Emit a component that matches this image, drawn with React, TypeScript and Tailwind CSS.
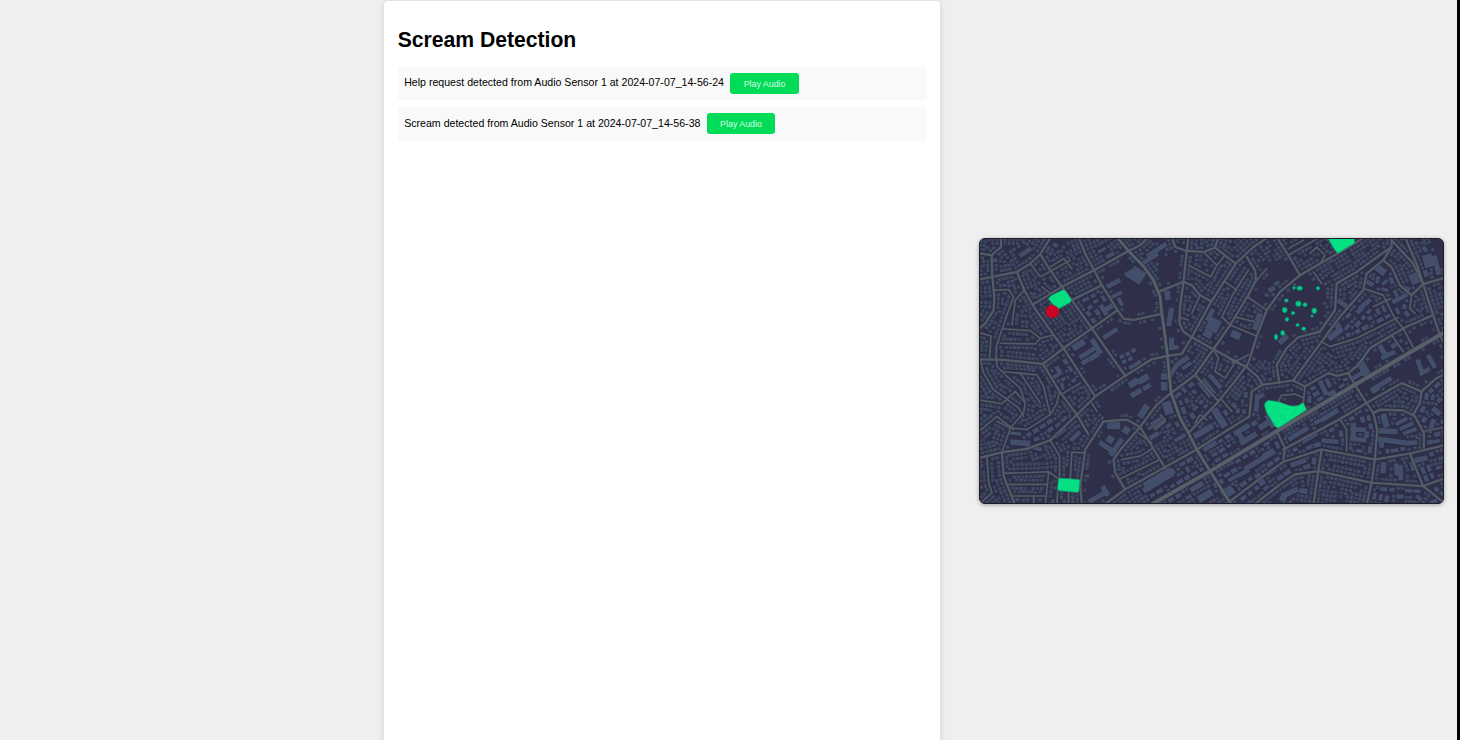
import React from "react";

type Pt = [number, number];

const parse = (s: string): Pt[] =>
  s.trim().split(/\s+/).map((p) => p.split(",").map(Number) as Pt);

const HIGHWAY = "540,828 720,725 920,605 1155,465 1410,315 1428,304";
const AVENUES = [
  "440,20 475,62 520,108 550,150 570,200 575,250 585,320 592,378 603,490 630,565 655,610 680,660 720,725 785,828",
];
const STREETS = [
  "535,20 510,45 475,62 372,120 275,170 190,222",
  "242,20 210,72 180,100 140,125 66,140 20,149",
  "92,20 92,50 64,75 66,140 72,200 70,240 45,280 20,302",
  "20,68 64,75",
  "325,20 345,70 372,120 395,165 442,240 460,266 490,270 572,252",
  "140,125 162,180 190,230 250,315 280,355 335,440 375,500",
  "210,72 240,120 275,170 305,210 365,295 465,438",
  "442,240 365,295 280,355 218,402 100,390 20,388",
  "305,210 395,165",
  "635,372 592,378 545,388 465,438 375,500 320,555 240,632 170,658 95,668 20,687",
  "655,20 650,62 640,155 630,230 628,280 640,305 665,322 730,358 830,412 862,440 878,465",
  "570,183 640,155 665,165 690,195 720,212",
  "635,372 665,322 720,220 797,100 850,50 895,20",
  "605,20 615,50 650,62 700,65 735,52 745,20",
  "735,52 797,100",
  "1125,57 1085,80 990,135 930,185 890,240 860,318 835,400 790,460 745,515 655,610",
  "1185,20 1125,57",
  "920,20 955,75 990,135",
  "1265,20 1265,50 1225,78 1160,125 1100,160 1095,240 1050,305 985,322 950,355 920,405 928,460",
  "1265,50 1240,90 1190,130 1180,180 1110,260 1055,335 970,452",
  "1265,30 1330,100 1360,162",
  "1305,20 1340,100 1360,162 1390,255 1410,315 1428,350",
  "1240,90 1265,110 1290,165 1325,195 1360,162 1428,142",
  "1390,255 1300,295 1200,355 1165,405 1135,430 1100,438 1075,430 1005,470 970,452 878,465 845,485 838,560 680,660",
  "1135,430 1155,465 1190,520 1210,550 1222,600 1215,690 1205,760 1190,828",
  "1428,432 1400,445 1355,485 1295,460 1190,520 1110,568 940,660",
  "1210,550 1230,540 1300,542 1335,560 1362,610 1362,655",
  "1355,485 1350,520 1330,555",
  "920,605 945,655 940,690",
  "780,815 860,755 940,697 1055,660 1215,690 1320,672 1428,646",
  "1055,660 1045,725 1030,828",
  "850,828 930,765 975,735 1045,725 1205,760 1360,770 1428,825",
  "1320,672 1360,770 1428,745",
  "400,828 465,780 680,660",
  "335,828 330,770 345,660 400,575 470,570 510,592 560,525 603,490",
  "510,592 455,655 430,690 435,730 465,780",
  "510,592 545,650 585,715",
  "675,435 710,475 745,515",
  "95,668 100,740 135,828",
  "218,402 268,485 320,555 355,615",
  "603,490 675,435 730,358 780,285 832,200 858,150 855,120 830,80",
];
const LANES = [
  "180,100 210,140 300,90",
  "240,110 280,85 305,115",
  "275,170 240,190 215,170",
  "72,180 115,178 130,200 108,260 78,350 78,390",
  "162,180 135,210 125,285",
  "100,297 180,302 210,325 250,315",
  "90,340 195,342 210,325",
  "26,308 62,318 58,385",
  "30,390 40,430 70,480 105,505 145,535 160,560",
  "20,510 95,522 135,485 165,520 160,550 120,595 95,668",
  "78,390 80,410 110,440 150,475 165,520",
  "95,425 200,435 220,470 240,555 170,600 120,595 80,575",
  "150,430 210,520",
  "268,485 260,520 240,555",
  "26,605 80,560 130,600",
  "330,460 280,490",
  "365,520 380,545",
  "240,632 268,680 268,742",
  "300,750 305,668 340,670",
  "100,732 235,727 265,748",
  "108,765 230,765",
  "128,800 225,800",
  "235,730 225,828",
  "50,685 55,760 65,790 30,822",
  "262,785 260,828",
  "295,785 295,828",
  "190,800 190,828",
  "655,105 722,140 740,105 700,65",
  "740,105 765,75",
  "755,260 780,285 860,318",
  "755,262 790,190 835,120",
  "832,200 890,240",
  "765,155 800,180",
  "630,262 655,270",
  "665,250 690,195",
  "800,262 855,275",
  "955,75 1050,20",
  "1020,70 1040,50 1065,75 1050,100",
  "1030,125 1055,160",
  "1055,335 1080,350 1160,325 1250,280 1285,262",
  "1180,175 1240,195 1275,265 1300,295 1330,352",
  "1210,230 1262,205",
  "1325,195 1320,235 1335,250",
  "1265,315 1300,365",
  "1005,470 1000,520",
  "925,515 935,497 975,493 1000,505",
  "1110,568 1130,600 1130,665",
  "730,358 745,385 735,425 765,445 800,390",
  "785,400 835,375",
  "765,375 790,395 830,412",
  "675,580 690,555 710,570",
  "755,510 785,545",
  "505,610 545,640",
  "455,690 510,680 550,655",
  "450,748 570,690",
  "555,600 585,575",
  "955,55 1000,30",
  "860,150 890,115",
  "570,555 585,570 550,595",
  "1362,605 1428,592",
];

const OPEN_LAND = [
  "400,90 460,75 530,130 560,185 568,245 495,262 465,262 445,235 430,190 400,150",
  "375,295 450,258 570,258 585,375 540,385 465,432",
  "285,360 365,305 460,440 375,495",
  "375,515 465,440 590,385 600,485 500,590 400,570",
  "345,820 335,760 350,670 400,580 500,580 440,690 425,740 455,780 400,820",
  "560,90 640,60 635,150 570,178",
  "578,185 625,170 625,290 660,325 630,368 595,370",
  "845,95 960,90 985,135 925,185 885,235 840,200 865,150",
  "935,190 1000,138 1062,155 1062,230 1085,240 1045,300 980,318 910,390 842,400 865,320 895,240",
  "775,300 855,322 830,400 745,360",
  "1100,430 1200,360 1300,300 1400,265 1400,312 1150,460",
  "1160,470 1410,325 1422,430 1350,478 1295,455 1195,515",
  "850,485 1000,470 1000,530 925,595 870,560",
].map(parse);

// Districts with mid-sized buildings instead of small houses.
const MIXED_LAND = [
  "605,495 675,440 740,515 655,605 630,565",
  "665,605 835,490 840,555 680,650",
  "850,560 920,600 850,640 690,665 700,650",
  "1005,470 1080,435 1150,440 1150,460 1010,540",
  "690,660 910,610 720,720",
  "730,730 925,612 938,660 935,690 785,805",
  "1185,190 1225,190 1270,260 1080,345 1065,330",
  "1205,120 1240,95 1285,165 1320,200 1320,250 1280,260 1240,190",
  "1222,550 1300,548 1355,610 1355,655 1220,685",
  "940,665 1190,525 1215,600 1210,685 1060,655",
  "1360,490 1422,450 1422,640 1370,655 1365,600 1340,560",
  "560,525 600,500 650,610 520,590",
  "510,770 660,680 715,728 560,815",
  "110,610 165,610 235,565 310,560 240,628 105,660",
  "245,405 290,380 330,440 270,480",
  "1310,670 1422,650 1422,820 1360,760",
  "320,210 395,170 440,240 365,290",
  "1190,770 1350,780 1400,820 1190,820",
  "800,760 1050,670 1040,715 940,755 860,820 795,820",
  "560,820 720,735 770,820",
  "1345,50 1422,30 1422,140 1365,155",
].map(parse);

// Large footprints: centre x, centre y, width, height, rotation.
const BLOCKS: number[][] = [
  [500, 135, 44, 42, 32], [478, 128, 32, 14, -28], [430, 160, 46, 14, -28],
  [438, 195, 38, 12, -28], [450, 215, 12, 26, -28], [418, 232, 38, 16, -32], [400, 240, 14, 36, -32],
  [420, 311, 50, 14, -33], [560, 60, 70, 15, -33], [540, 85, 54, 14, -33],
  [592, 196, 17, 30, -10], [602, 250, 16, 34, 8], [597, 276, 16, 26, 8], [604, 342, 16, 38, 2], [613, 353, 24, 14, -8],
  [325, 345, 42, 20, -32], [350, 370, 54, 14, -32], [378, 350, 16, 52, -32], [345, 395, 26, 14, -32], [372, 380, 34, 16, -32],
  [258, 438, 34, 12, -32], [265, 422, 14, 28, -32],
  [495, 405, 42, 12, -32], [455, 380, 14, 12, -30], [473, 372, 14, 12, -30], [490, 362, 14, 12, -30], [462, 395, 14, 12, -30], [480, 387, 14, 12, -30],
  [582, 440, 20, 20, 0], [582, 470, 20, 26, 0], [490, 460, 32, 20, -32], [520, 448, 36, 20, -32], [498, 490, 36, 16, -32], [530, 472, 26, 14, -32],
  [520, 545, 20, 44, 32], [593, 535, 28, 40, -18], [562, 575, 44, 16, -32], [548, 590, 36, 10, -32],
  [430, 588, 40, 22, 2], [468, 602, 22, 22, 35], [420, 630, 22, 22, 35], [412, 655, 60, 15, 35], [438, 653, 62, 15, -55],
  [380, 804, 58, 15, -30], [405, 785, 16, 34, -32], [350, 740, 14, 10, 0],
  [565, 750, 96, 30, -31], [600, 730, 30, 20, -31], [535, 775, 38, 16, -31],
  [860, 520, 14, 54, 5], [872, 500, 24, 12, -30], [748, 565, 22, 64, -32], [700, 605, 66, 18, -31],
  [815, 600, 54, 16, -31], [835, 627, 58, 17, -31], [812, 622, 15, 40, -31], [885, 585, 42, 17, -31], [900, 575, 15, 44, -31],
  [870, 692, 104, 16, -31], [895, 672, 38, 16, -31], [840, 710, 38, 14, -31],
  [745, 762, 34, 16, -31], [770, 785, 38, 20, -31], [820, 730, 38, 14, -31], [790, 745, 34, 12, -31], [680, 772, 44, 16, -31], [705, 800, 48, 22, -31],
  [720, 650, 46, 14, -31], [550, 620, 38, 14, -31], [630, 625, 38, 12, -31],
  [730, 285, 38, 40, 28], [713, 312, 28, 22, 28], [862, 275, 18, 54, 18], [797, 315, 30, 22, 25], [720, 255, 14, 40, 28],
  [605, 430, 14, 50, 32], [635, 395, 50, 16, -35], [650, 408, 34, 12, -35], [710, 475, 28, 58, -38], [735, 455, 14, 54, -42],
  [985, 612, 70, 15, -31], [1078, 557, 62, 15, -31], [1045, 575, 28, 12, -31],
  [1350, 410, 14, 44, -20], [1365, 425, 36, 14, -30], [1385, 395, 14, 44, -30], [1240, 460, 58, 15, -31], [1215, 478, 26, 20, -31],
  [1180, 415, 24, 48, -30], [1240, 365, 16, 44, -30], [1255, 375, 46, 14, -25], [1160, 440, 38, 13, -31], [1275, 345, 26, 14, -31],
  [1095, 312, 50, 20, -38], [1105, 290, 18, 28, -30], [1120, 222, 42, 16, 35], [1185, 222, 44, 14, -42], [1170, 240, 26, 14, -42], [1232, 120, 34, 22, 38], [1200, 160, 24, 14, 30],
  [1335, 145, 30, 32, -25], [1290, 205, 52, 13, -28], [1310, 175, 22, 12, 20], [1375, 92, 30, 40, -15], [1400, 105, 16, 60, -15],
  [1245, 573, 18, 42, -15], [1255, 605, 56, 16, 3], [1270, 635, 92, 16, 8], [1310, 590, 46, 12, -25], [1320, 605, 44, 12, -20], [1295, 575, 40, 12, -28], [1325, 640, 34, 14, -5], [1235, 640, 15, 28, 3],
  [1150, 605, 16, 50, 0], [1165, 630, 50, 14, 5], [1170, 600, 36, 14, 5], [1190, 615, 14, 20, 5], [1060, 475, 15, 48, -25], [1085, 490, 26, 14, -25], [1075, 460, 13, 28, -25],
  [1020, 625, 54, 12, -31], [1080, 635, 50, 14, 5], [1350, 690, 48, 16, -12], [1330, 710, 18, 28, -15], [1240, 715, 17, 34, 5], [1280, 720, 14, 36, -8], [1292, 730, 15, 46, -2],
  [960, 790, 54, 16, -25], [940, 805, 20, 24, 25], [1000, 785, 24, 16, 5], [870, 750, 20, 40, -30], [905, 725, 30, 14, -31], [985, 700, 50, 15, -20],
  [905, 178, 20, 14, -30], [920, 160, 18, 11, -30], [890, 195, 13, 10, 0], [940, 328, 34, 18, -45],
  [135, 612, 34, 10, 5], [150, 640, 60, 17, 4], [70, 90, 20, 12, 0], [165, 66, 42, 14, -34], [1385, 590, 14, 44, 20], [1400, 545, 30, 16, 40],
  [255, 45, 16, 12, 20], [190, 655, 50, 12, 12], [395, 60, 26, 10, -30], [420, 75, 28, 12, -30], [780, 790, 30, 18, -30],
  [240, 600, 20, 12, -35], [315, 620, 40, 14, -45], [270, 610, 44, 12, -38],
];

const PARKS = [
  "M234,205 L245,195 L278,179 Q284,178 288,185 L303,208 Q305,213 300,217 L266,236 Q260,238 256,234 Z",
  "M1072,20 L1154,20 L1154,38 L1104,69 Q1099,66 1090,52 Z",
  "M884,530 Q882,516 896,512 L925,516 L960,528 Q985,532 996,520 L1001,520 L1010,541 L928,594 Q919,598 913,587 Q898,561 889,548 Z",
  "M268,746 L326,750 Q330,751 329,757 L326,785 Q325,790 319,789 L266,784 Q262,783 262,778 L264,751 Q265,746 268,746 Z",
];

const TREES: number[][] = [
  [972, 173, 5, 5], [989, 174, 9, 7], [1044, 174, 6, 6], [949, 211, 6, 6], [985, 221, 9, 9], [1005, 224, 7, 7],
  [944, 240, 8, 9], [969, 249, 6, 6], [1033, 242, 8, 9], [1026, 258, 5, 4], [951, 268, 6, 7], [983, 285, 6, 5],
  [1001, 296, 7, 6], [938, 309, 7, 8], [918, 321, 6, 9],
];

const ALL_ROADS = [HIGHWAY, ...AVENUES, ...STREETS, ...LANES].map(parse);
const SEGMENTS = ALL_ROADS.flatMap((r) => r.slice(1).map((p, i) => [r[i][0], r[i][1], p[0], p[1]]));

const noise = (n: number) => {
  const v = Math.sin(n * 127.1 + 11.7) * 43758.5453;
  return v - Math.floor(v);
};

const inside = (x: number, y: number, poly: Pt[]) => {
  let hit = false;
  for (let i = 0, j = poly.length - 1; i < poly.length; j = i++) {
    const [xi, yi] = poly[i];
    const [xj, yj] = poly[j];
    if (yi > y !== yj > y && x < ((xj - xi) * (y - yi)) / (yj - yi) + xi) hit = !hit;
  }
  return hit;
};

const nearRoad = (x: number, y: number, limit: number) =>
  SEGMENTS.some(([ax, ay, bx, by]) => {
    if (x < Math.min(ax, bx) - limit || x > Math.max(ax, bx) + limit) return false;
    if (y < Math.min(ay, by) - limit || y > Math.max(ay, by) + limit) return false;
    const dx = bx - ax;
    const dy = by - ay;
    const t = Math.max(0, Math.min(1, ((x - ax) * dx + (y - ay) * dy) / (dx * dx + dy * dy)));
    return Math.hypot(x - ax - t * dx, y - ay - t * dy) < limit;
  });

const nearRect = (x: number, y: number, rects: number[][], pad: number) =>
  rects.some(([cx, cy, w, h, a]) => {
    const r = (-a * Math.PI) / 180;
    const dx = x - cx;
    const dy = y - cy;
    const u = dx * Math.cos(r) - dy * Math.sin(r);
    const v = dx * Math.sin(r) + dy * Math.cos(r);
    return Math.abs(u) < w / 2 + pad && Math.abs(v) < h / 2 + pad;
  });

// Walks both sides of every street at the given distance from its centre line.
const alongStreets = (
  offset: number,
  step: number,
  visit: (x: number, y: number, angle: number) => void,
) => {
  for (const [ax, ay, bx, by] of SEGMENTS) {
    const len = Math.hypot(bx - ax, by - ay);
    const ux = (bx - ax) / len;
    const uy = (by - ay) / len;
    const angle = (Math.atan2(uy, ux) * 180) / Math.PI;
    for (const side of [-1, 1]) {
      for (let t = step / 2; t < len; t += step) {
        const x = ax + ux * t - uy * offset * side;
        const y = ay + uy * t + ux * offset * side;
        if (x > 22 && x < 1426 && y > 20 && y < 826) visit(x, y, angle);
      }
    }
  }
};

const buildMidBlocks = () => {
  const out: number[][] = [];
  let seed = 500;
  for (const offset of [17, 36, 55]) {
    alongStreets(offset, 25, (x, y, angle) => {
      seed++;
      if (!MIXED_LAND.some((p) => inside(x, y, p))) return;
      if (noise(seed) < 0.2 || nearRoad(x, y, 15) || nearRect(x, y, BLOCKS, 11)) return;
      if (out.some(([ox, oy]) => Math.hypot(ox - x, oy - y) < 19)) return;
      out.push([x, y, 14 + noise(seed + 0.2) * 9, 10 + noise(seed + 0.7) * 4, angle]);
    });
  }
  return out;
};

const MID_BLOCKS = buildMidBlocks();
const BUILT = [...BLOCKS, ...MID_BLOCKS];

const buildHouses = () => {
  const houses: number[][] = [];
  const grid = new Map<string, Pt[]>();
  let seed = 0;
  for (const offset of [12.5, 25, 37, 49, 61]) {
    alongStreets(offset, 12.5, (x, y, angle) => {
      seed++;
      const open = OPEN_LAND.some((p) => inside(x, y, p));
      if (open && (offset > 13 || noise(seed + 0.5) < 0.6)) return;
      if (!open && noise(seed + 0.9) < 0.04) return;
      if (nearRoad(x, y, 10.2) || nearRect(x, y, BUILT, 6.5)) return;
      const gx = Math.floor(x / 11);
      const gy = Math.floor(y / 11);
      for (let i = -1; i <= 1; i++)
        for (let j = -1; j <= 1; j++)
          for (const [hx, hy] of grid.get(`${gx + i},${gy + j}`) ?? [])
            if (Math.hypot(hx - x, hy - y) < 10.6) return;
      const key = `${gx},${gy}`;
      grid.set(key, [...(grid.get(key) ?? []), [x, y]]);
      houses.push([x, y, 9.3 + noise(seed) * 2.4, 8.2 + noise(seed + 0.3) * 2.2, angle, seed % 3]);
    });
  }
  return houses;
};

const HOUSES = buildHouses();

const rectPath = (x: number, y: number, w: number, h: number, deg: number) => {
  const r = (deg * Math.PI) / 180;
  const c = Math.cos(r);
  const s = Math.sin(r);
  return (
    "M" +
    [[-w, -h], [w, -h], [w, h], [-w, h]]
      .map(([a, b]) => `${(x + (a * c - b * s) / 2).toFixed(1)},${(y + (a * s + b * c) / 2).toFixed(1)}`)
      .join("L") +
    "Z"
  );
};

const housePath = (tone: number) =>
  HOUSES.filter((h) => h[5] === tone).map(([x, y, w, h, a]) => rectPath(x, y, w, h, a)).join("");

const shadowPath = HOUSES.map(([x, y, w, h, a]) => rectPath(x - 0.6, y + 2.2, w, h, a)).join("");
const blockPath = BUILT.map(([x, y, w, h, a]) => rectPath(x, y, w, h, a)).join("");
const blockShadow = BUILT.map(([x, y, w, h, a]) => rectPath(x - 1, y + 3, w, h, a)).join("");

function CityMap() {
  return (
    <svg viewBox="29 26 1392 795" preserveAspectRatio="none" className="block h-full w-full">
      <rect x="20" y="20" width="1410" height="810" fill="#2f2f49" />
      <path d={shadowPath} fill="#242b3d" />
      <path d={housePath(0)} fill="#3f4962" />
      <path d={housePath(1)} fill="#3b465d" />
      <path d={housePath(2)} fill="#434864" />
      <path d={blockShadow} fill="#252a3e" />
      <path d={blockPath} fill="#434e6b" />
      <g fill="none" strokeLinejoin="round" strokeLinecap="round">
        <g stroke="#2f3548">
          {LANES.map((r) => <polyline key={r} points={r} strokeWidth="8" />)}
          {STREETS.map((r) => <polyline key={r} points={r} strokeWidth="10" />)}
          {AVENUES.map((r) => <polyline key={r} points={r} strokeWidth="12" />)}
        </g>
        <g stroke="#535b66">
          {LANES.map((r) => <polyline key={r} points={r} strokeWidth="5" />)}
          {STREETS.map((r) => <polyline key={r} points={r} strokeWidth="6.6" />)}
        </g>
        <g stroke="#575f69">
          {AVENUES.map((r) => <polyline key={r} points={r} strokeWidth="8.5" />)}
          <polyline points={HIGHWAY} strokeWidth="12" />
        </g>
      </g>
      <g fill="#04df82" stroke="#1c8d70" strokeWidth="2">
        {PARKS.map((d) => <path key={d} d={d} />)}
      </g>
      <path d="M905,530 L900,548 M925,535 L948,550 L970,540 M950,565 L962,545 M912,568 L925,562 L934,582" fill="none" stroke="#25ec94" strokeWidth="2" />
      <g fill="#08c98c" stroke="#14594f" strokeWidth="2">
        {TREES.map(([x, y, rx, ry]) => <ellipse key={`${x}-${y}`} cx={x} cy={y} rx={rx} ry={ry} />)}
      </g>
      <ellipse cx="246" cy="244" rx="20" ry="19.5" fill="#cc0322" />
    </svg>
  );
}

const EVENTS = [
  "Help request detected from Audio Sensor 1 at 2024-07-07_14-56-24",
  "Scream detected from Audio Sensor 1 at 2024-07-07_14-56-38",
];

export default function App() {
  return (
    <div className="flex h-[740px] w-[1460px] overflow-hidden bg-[#efefef] font-['Liberation_Sans',Arial,sans-serif] text-black">
      <div className="w-[384.4px] shrink-0" />
      <main className="mt-px h-[760px] w-[556px] shrink-0 rounded-[4px] bg-white px-[13.3px] pt-[26px] shadow-[0_0_7px_rgba(0,0,0,0.12)]">
        <h1 className="mb-[13.5px] text-[21.15px] leading-[26px] font-bold">Scream Detection</h1>
        <ul className="flex flex-col gap-[7px]">
          {EVENTS.map((text) => (
            <li key={text} className="flex h-[33.6px] items-center rounded-[3px] bg-[#f9f9f9] px-[6.5px] text-[10.6px]">
              <span className="-mt-[0.5px] whitespace-nowrap">{text}</span>
              <button className="ml-[6.4px] h-[21px] rounded-[3px] bg-[#00db58] px-[13.3px] text-[8.85px] leading-[22px] whitespace-nowrap text-[#d8ffe6]">
                Play Audio
              </button>
            </li>
          ))}
        </ul>
      </main>
      <aside className="flex flex-1 items-center justify-end pt-[1.5px] pr-[13px]">
        <div className="h-[266px] w-[465.5px] overflow-hidden rounded-[6px] border border-[#1c1d28] bg-[#2f3049] shadow-[0_1px_4px_rgba(0,0,0,0.35)]">
          <CityMap />
        </div>
      </aside>
      <div className="w-[3px] shrink-0 bg-black" />
    </div>
  );
}
